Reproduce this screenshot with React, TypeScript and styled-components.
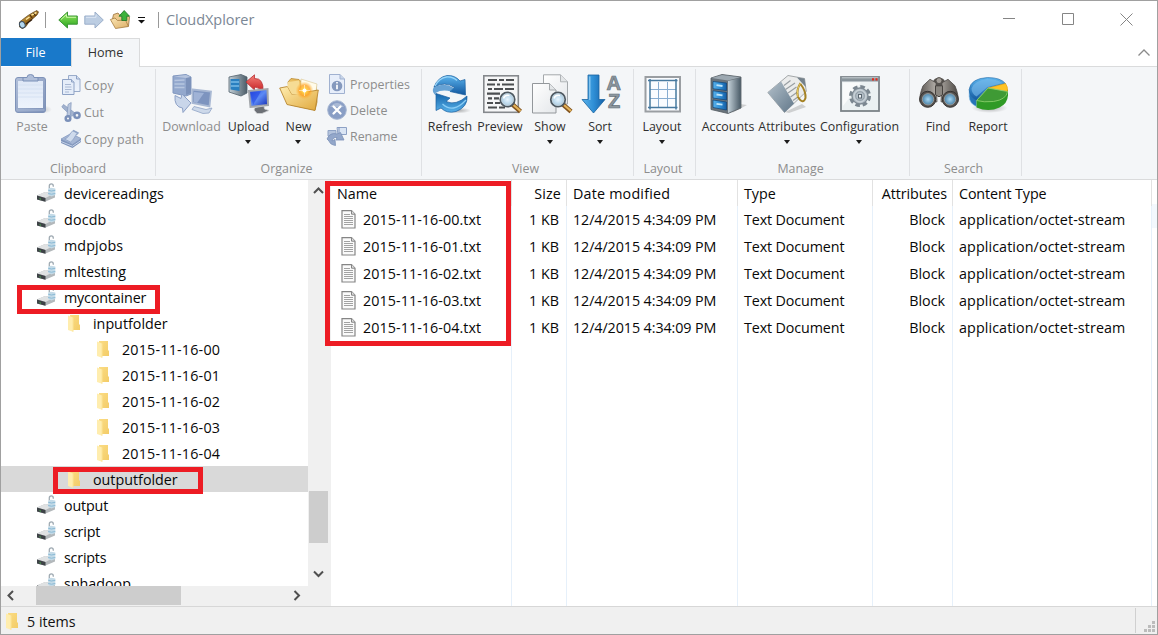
import React from 'react';
import styled, { createGlobalStyle, css } from 'styled-components';

const GlobalStyle = createGlobalStyle`
  *, *::before, *::after { box-sizing: border-box; }
  body { margin: 0; font-family: 'Open Sans', 'Noto Sans', sans-serif; color: #111; overflow: hidden; }
  svg { display: block; flex: none; overflow: visible; }
`;

const Window = styled.div`
  width: 1158px;
  height: 635px;
  display: flex;
  flex-direction: column;
  border: 1px solid #a0a0a0;
  background: #fff;
`;

const Text = styled.span<{ $track?: number }>`
  letter-spacing: ${(p) => p.$track ?? 0}px;
  white-space: pre;
`;

/* ---------- title bar ---------- */

const TitleBar = styled.header`
  height: 37px;
  display: flex;
  align-items: center;
  padding-left: 17px;
  flex: none;
`;
const QuickAccess = styled.div`
  display: flex;
  align-items: center;
  flex: 1;
  height: 37px;
`;
const TitleDivider = styled.i<{ $l: number; $r: number }>`
  width: 1px;
  height: 16px;
  background: #999;
  margin: 0 ${(p) => p.$r}px 0 ${(p) => p.$l}px;
`;
const QuickIcon = styled.span<{ $r: number }>`
  margin-right: ${(p) => p.$r}px;
`;
const AppTitle = styled.h1`
  margin: 0;
  font-size: 14.5px;
  font-weight: 400;
  line-height: 20px;
  color: #7b8795;
`;
const CaptionButton = styled.span`
  width: 58.5px;
  display: flex;
  justify-content: center;
`;
const CaptionButtons = styled.div`
  display: flex;
  align-items: center;
  padding-right: 1px;
`;

/* ---------- tabs ---------- */

const Tabs = styled.nav`
  height: 29px;
  display: flex;
  flex: none;
  font-size: 12.6px;
  line-height: 28px;
`;
const FileTab = styled.div`
  width: 70px;
  height: 28px;
  line-height: 29px;
  padding-right: 1px;
  text-align: center;
  color: #fff;
  background: #1979ca;
`;
const HomeTab = styled.div`
  width: 69px;
  text-align: center;
  color: #333;
  background: #f4f6f8;
  border: 1px solid #dadbdc;
  border-bottom: 0;
  line-height: 27px;
`;
const TabRest = styled.div`
  flex: 1;
  border-bottom: 1px solid #dadbdc;
  display: flex;
  justify-content: flex-end;
  padding: 11px 7px 0 0;
`;

/* ---------- ribbon ---------- */

const Ribbon = styled.section`
  height: 113px;
  flex: none;
  display: flex;
  background: #f4f6f8;
  border-bottom: 1px solid #dadbdc;
  padding-top: 2px;
`;
const Group = styled.div<{ $w: number }>`
  width: ${(p) => p.$w}px;
  height: 107px;
  border-right: 1px solid #dfe1e4;
  display: flex;
  flex-direction: column;
`;
const GroupBody = styled.div<{ $pad: number }>`
  display: flex;
  flex: none;
  height: 90px;
  padding: 5px 0 0 ${(p) => p.$pad}px;
`;
const GroupName = styled.div<{ $inset: number }>`
  text-align: center;
  font-size: 12.4px;
  line-height: 20px;
  padding-right: ${(p) => p.$inset}px;
  color: #8d8d8d;
`;
const BigButton = styled.div<{ $w: number; $off?: boolean }>`
  width: ${(p) => p.$w}px;
  flex: none;
  display: flex;
  flex-direction: column;
  align-items: center;
  font-size: 12.4px;
  line-height: 20px;
  color: ${(p) => (p.$off ? '#8d8d8d' : '#2f2f2f')};
  svg + span { margin-top: 3px; }
`;
const Caret = styled.i`
  width: 0;
  height: 0;
  border: 3px solid transparent;
  border-top: 4px solid #1c1c1c;
  border-bottom: 0;
  margin: 3px 1px 0 0;
`;
const SmallStack = styled.div<{ $pitch: number; $l: number; $top: number }>`
  display: flex;
  flex-direction: column;
  margin-left: ${(p) => p.$l}px;
  padding-top: ${(p) => p.$top}px;
  > div { height: ${(p) => p.$pitch}px; }
`;
const SmallButton = styled.div`
  display: flex;
  gap: 3px;
  align-items: flex-start;
  font-size: 12.4px;
  line-height: 21px;
  color: #8d8d8d;
`;

/* ---------- body ---------- */

const Body = styled.main`
  height: 426px;
  flex: none;
  display: flex;
`;
const TreePane = styled.aside`
  width: 330px;
  background: #f0f0f0;
  display: flex;
  flex-direction: column;
`;
const TreeTop = styled.div`
  display: flex;
  height: 406px;
`;
const Tree = styled.div`
  width: 307px;
  height: 406px;
  overflow: hidden;
  background: #fff;
`;
const rowText = css`
  font-size: 14.3px;
  line-height: 26px;
  color: #080808;
`;
const TreeRow = styled.div<{ $depth: number; $selected?: boolean }>`
  ${rowText}
  position: relative;
  height: 26px;
  display: flex;
  align-items: center;
  gap: 8px;
  padding-left: ${(p) => 35 + p.$depth * 29}px;
  background: ${(p) => (p.$selected ? '#d9d9d9' : 'transparent')};
  > span { padding-top: 1px; }
`;
const Highlight = styled.div<{ $x: number; $y: number; $w: number; $h: number }>`
  position: absolute;
  left: ${(p) => p.$x}px;
  top: ${(p) => p.$y}px;
  width: ${(p) => p.$w}px;
  height: ${(p) => p.$h}px;
  border: 5px solid #ed1c24;
  z-index: 2;
`;
const VScroll = styled.div`
  width: 20px;
  margin-left: 1px;
  display: flex;
  flex-direction: column;
  padding: 7px 0 8px;
`;
const VThumb = styled.div`
  width: 19px;
  height: 52px;
  background: #cdcdcd;
  margin: 296px 0 27px;
`;
const HScroll = styled.div`
  display: flex;
  height: 19px;
  align-items: center;
`;
const HThumb = styled.div`
  width: 145px;
  height: 19px;
  background: #cdcdcd;
  margin: 0 112px 0 21px;
`;
const FileList = styled.section`
  position: relative;
  flex: 1;
  display: flex;
`;
const Column = styled.div<{ $w: number; $right?: boolean }>`
  width: ${(p) => p.$w}px;
  flex: none;
  text-align: ${(p) => (p.$right ? 'right' : 'left')};
  border-right: 1px solid #e6f0fa;
`;
const HeadCell = styled.div<{ $right?: boolean }>`
  ${rowText}
  height: 26px;
  line-height: 28px;
  padding: 0 ${(p) => (p.$right ? 5 : 0)}px 0 6px;
  margin-right: -1px;
  border-right: 1px solid #e2e2e2;
`;
const Cell = styled.div<{ $right?: boolean; $icon?: boolean }>`
  ${rowText}
  height: 27px;
  line-height: 27px;
  display: flex;
  align-items: center;
  justify-content: ${(p) => (p.$right ? 'flex-end' : 'flex-start')};
  gap: 7px;
  padding: 0 ${(p) => (p.$right ? 7 : 0)}px 0 ${(p) => (p.$icon ? 10 : 6)}px;
`;
const ListEdge = styled.div`
  flex: 1;
  height: 24px;
  margin-top: 24px;
  background: #f3f8fd;
`;

const StatusBar = styled.footer`
  flex: 1;
  border-top: 1px solid #d7d7d7;
  background: #f0f0f0;
  display: flex;
  align-items: center;
  padding-left: 2px;
  gap: 4px;
  font-size: 14.3px;
  > span { padding-top: 2px; }
`;
const Grip = styled.div`
  margin-left: auto;
  height: 25px;
  border-left: 1px solid #d0d0d0;
  padding: 13px 1px 0 8px;
`;

/* ---------- shared gradients ---------- */

const Gradients = () => (
  <svg width="0" height="0">
    <defs>
      <linearGradient id="disPaper" x1="0" y1="0" x2="0" y2="1"><stop stopColor="#dfe8f6" /><stop offset="1" stopColor="#edf3fc" /></linearGradient>
      <linearGradient id="disFrame" x1="0" y1="0" x2="1" y2="1"><stop stopColor="#b3c1da" /><stop offset="1" stopColor="#7d91b8" /></linearGradient>
      <linearGradient id="green" x1="0" y1="0" x2="0" y2="1"><stop stopColor="#9bea62" /><stop offset="1" stopColor="#28a51f" /></linearGradient>
      <linearGradient id="blue" x1="0" y1="0" x2="0" y2="1"><stop stopColor="#5cb5ee" /><stop offset="1" stopColor="#12579f" /></linearGradient>
      <linearGradient id="blueDeep" x1="0" y1="0" x2="0" y2="1"><stop stopColor="#1565ab" /><stop offset="1" stopColor="#58b0e8" /></linearGradient>
      <linearGradient id="blueH" x1="0" y1="0" x2="1" y2="0"><stop stopColor="#5ab2ea" /><stop offset=".5" stopColor="#2f8fd6" /><stop offset="1" stopColor="#155fa6" /></linearGradient>
      <linearGradient id="gold" x1="0" y1="0" x2="1" y2="1"><stop stopColor="#ffedb0" /><stop offset="1" stopColor="#e0a83c" /></linearGradient>
      <linearGradient id="tan" x1="0" y1="0" x2="1" y2="1"><stop stopColor="#fbe6b5" /><stop offset="1" stopColor="#dcae66" /></linearGradient>
      <linearGradient id="steel" x1="0" y1="0" x2="1" y2="0"><stop stopColor="#c3d0d8" /><stop offset="1" stopColor="#4c5d69" /></linearGradient>
      <linearGradient id="slate" x1="0" y1="0" x2="1" y2="1"><stop stopColor="#b3c0ca" /><stop offset="1" stopColor="#62788a" /></linearGradient>
      <linearGradient id="red" x1="0" y1="0" x2="0" y2="1"><stop stopColor="#f58078" /><stop offset="1" stopColor="#c41e22" /></linearGradient>
      <linearGradient id="paper" x1="0" y1="0" x2="1" y2="1"><stop stopColor="#fff" /><stop offset="1" stopColor="#e4e7ea" /></linearGradient>
      <linearGradient id="screen" x1="0" y1="0" x2="1" y2="1"><stop stopColor="#1b3bd4" /><stop offset=".5" stopColor="#5d8bf5" /><stop offset="1" stopColor="#0f25b0" /></linearGradient>
      <linearGradient id="folderBack" x1="0" y1="0" x2="1" y2="1"><stop stopColor="#fbdc83" /><stop offset="1" stopColor="#f3cc68" /></linearGradient>
      <linearGradient id="brass" x1="0" y1="0" x2="1" y2="1"><stop stopColor="#f6d774" /><stop offset=".5" stopColor="#9b6a1c" /><stop offset="1" stopColor="#4b2706" /></linearGradient>
      <linearGradient id="barrel" x1="0" y1="0" x2="1" y2="0"><stop stopColor="#5a5652" /><stop offset=".45" stopColor="#b9b4ae" /><stop offset="1" stopColor="#4a4642" /></linearGradient>
      <radialGradient id="glow"><stop stopColor="#fff" /><stop offset=".25" stopColor="#ffd24a" /><stop offset=".6" stopColor="#ff9d1c" stopOpacity=".75" /><stop offset="1" stopColor="#ffb83a" stopOpacity="0" /></radialGradient>
      <radialGradient id="lens"><stop stopColor="#e9f6ff" /><stop offset="1" stopColor="#9fc6e0" /></radialGradient>
      <radialGradient id="lensDark"><stop stopColor="#a7d7f3" /><stop offset="1" stopColor="#4b83a8" /></radialGradient>
      <radialGradient id="shadow"><stop stopColor="#000" stopOpacity=".3" /><stop offset="1" stopColor="#000" stopOpacity="0" /></radialGradient>
    </defs>
  </svg>
);

const Big = ({ children }: { children: React.ReactNode }) => <svg width="40" height="40" viewBox="0 0 40 40">{children}</svg>;
const Small = ({ children }: { children: React.ReactNode }) => <svg width="20" height="20" viewBox="0 0 20 20">{children}</svg>;

/* ---------- title bar icons ---------- */

const Telescope = () => (
  <svg width="21" height="20" viewBox="0 0 21 20">
    <path d="M1.500 12 6 8.500 10 5.500 15 2.500 19 .5 20.500 2 19 5 15 8.500 10.500 12.500 8 16.500 4.500 18.500 1.500 17z" fill="url(#brass)" stroke="#5d421c" strokeWidth=".7" />
    <path d="M8 9.500 11.500 7M13.500 5.200 18.500 2.500" stroke="#ffe9a0" strokeWidth="1.500" />
    <path d="M12 5 14.500 8.500M15.500 3 17.500 6" stroke="#3a210a" strokeWidth=".9" />
    <path d="M8 14 14 9.500" stroke="#35200d" strokeWidth="1.500" />
    <ellipse cx="4.300" cy="14.800" rx="2.700" ry="3.300" fill="#b3d8f0" stroke="#3c4e60" transform="rotate(-25 4.300 14.800)" />
  </svg>
);
const BackArrow = () => (
  <Small><path d="M.8 10 9.500 2V6H19.300V14.200H9.500V18z" fill="url(#green)" stroke="#3c9636" /><path d="M3 9.500 8.500 4.500V7.300H18" stroke="#c9f7a6" fill="none" /></Small>
);
const ForwardArrow = () => (
  <Small><path d="M19.300 10 11 2V6H.8V14.200H11V18z" fill="#bccde2" stroke="#9bafca" /><path d="M2 7.300h10V4.500" stroke="#dce7f4" fill="none" /></Small>
);
const FolderUp = () => (
  <Small>
    <path d="M2.500 9 3.500 4.500 8 3 9.500 5 17 4.500 19.500 7 18.500 16 6 17z" fill="#ecc88c" stroke="#98703a" strokeWidth=".8" />
    <path d="M.4 9.500 5 8 7.500 10.500 15.500 10 18.500 16.500 5.500 18.500z" fill="url(#tan)" stroke="#a67c40" strokeWidth=".8" />
    <path d="M14.200.5 19.500 6.200H16.800V10.500H11.800V6.200H9z" fill="#3db23c" stroke="#1d7426" strokeWidth=".8" />
  </Small>
);

/* ---------- ribbon icons ---------- */

const PasteIcon = () => (
  <Big>
    <ellipse cx="32" cy="35.500" rx="8" ry="4" fill="url(#shadow)" opacity=".5" />
    <rect x="3.500" y="3.500" width="30" height="35" rx="2.500" fill="url(#disFrame)" stroke="#7f93b9" />
    <rect x="6" y="7" width="25" height="27" fill="url(#disPaper)" />
    <path d="M6 11h25M6 15h25M6 19h25M6 23h25" stroke="#d5e1f2" />
    <path d="M4.500 36h28" stroke="#a8b8d5" />
    <path d="M11 7V3.500h4Q15 .5 18.500.5T22 3.500h4v3.500z" fill="#b0bfd9" stroke="#7b90b7" />
  </Big>
);
const CopyIcon = () => (
  <Small>
    <path d="M7.500.5h8l3.500 3.500v12.500H7.500z" fill="url(#disPaper)" stroke="#9aacca" />
    <path d="M1.500 4.500h9l2.500 2.500v12.500H1.500z" fill="#e5edf9" stroke="#8ea2c5" />
    <path d="M4 9.500h6M4 12h6.500M4 14.500h6.500M4 17h4" stroke="#aab9d4" />
    <path d="M15.500.5v3.500h3.500M10.500 4.500v2.500h2.500" stroke="#8ea2c5" fill="#d3deef" />
  </Small>
);
const CutIcon = () => (
  <Small>
    <path d="M.8 5 2.500 2.500 14 11 11 14.500z" fill="#a2b2ce" stroke="#8196bb" strokeWidth=".7" />
    <path d="M10.200.5 9.500 13.500 6 13.500 7 2.500z" fill="#bac7dd" stroke="#8196bb" strokeWidth=".7" />
    <circle cx="7" cy="16.500" r="2.300" fill="none" stroke="#7a90b9" strokeWidth="2.500" />
    <circle cx="16" cy="13.300" r="2.600" fill="none" stroke="#7a90b9" strokeWidth="2.500" />
  </Small>
);
const CopyPathIcon = () => (
  <Small>
    <path d="M0 10 10 4.500 20 9.500V13L11.500 19 0 14z" fill="#7e94bb" />
    <path d="M0 10 10 4.500 20 9.500 11.500 15.500z" fill="#a5b6d4" stroke="#8ca0c4" strokeWidth=".7" />
    <path d="M3.500 10C8 9 8 5 12 1.500L17 4C13 7.500 13 11 9.500 13z" fill="#cedaec" stroke="#8ca0c4" strokeWidth=".8" />
    <path d="M12 1.500 17 4 15 6" fill="none" stroke="#92a6c8" strokeWidth="1.500" />
    <path d="M0 12.500 11.500 17.200 20 11.500" stroke="#c3d0e6" fill="none" />
  </Small>
);
const DownloadIcon = () => (
  <Big>
    <path d="M1 2 14 .5 19 3v17L14 22 1 19z" fill="#93a8cd" stroke="#8298bf" />
    <path d="M14 3v18l5-2V3z" fill="#7c92ba" />
    <path d="M2 2.500 14 1l4.500 2-4.500 1z" fill="#b7c5de" />
    <path d="M2.500 6.500l10-.5M2.500 10h10M2.500 13.500h10" stroke="#b7c6e0" strokeWidth="1.300" />
    <path d="M3 21.500 9 24.500 10 20 19 29 11 38.500 10.500 34Q2 33 3 21.500z" fill="#c9d6ea" stroke="#8ca0c6" />
    <path d="M20.500 15.500 39 17.500 37.500 32.500 20.500 29z" fill="#7d94bf" stroke="#a8b8d3" strokeWidth="1.800" />
    <path d="M22 18 32 19 25 29 22 28z" fill="#a0b3d6" />
    <path d="M22 32.500 34 35.500 40 34 37 39 31 39.500 20 35.500z" fill="#cdd9ea" stroke="#8fa3c5" strokeWidth=".8" />
  </Big>
);
const UploadIcon = () => (
  <Big>
    <path d="M0 3 12 .5 18 3V19L12 22 0 18z" fill="url(#steel)" stroke="#51606b" strokeWidth=".8" />
    <path d="M1.500 5h9v12l-9-1.500z" fill="#2a7fc0" />
    <path d="M2 8h8M2 12h8" stroke="#9fd7f7" strokeWidth="1.200" />
    <path d="M17 8 25.500.8V4.500Q35 4 34 18Q31 13.500 25.500 13V16z" fill="url(#red)" stroke="#b63033" strokeWidth=".8" />
    <path d="M20 17 38.500 15 39 31 21.500 33z" fill="url(#screen)" stroke="#a2a6ab" strokeWidth="2" />
    <path d="M21.500 18.500 32 17.300 24 31z" fill="#2348e4" opacity=".6" />
    <path d="M26 33.500 35 32 35.500 35 40 36.500 33 39.500 28 39.500 25 36z" fill="#6c7076" stroke="#d0d2d4" strokeWidth=".8" />
  </Big>
);
const NewIcon = () => (
  <Big>
    <path d="M9 8 12 4.500 20 5.500 23 8.500 37 11 38 28 36 36 12 31z" fill="#e9bd61" stroke="#bb8a2d" strokeWidth=".8" />
    <path d="M22 5 38 10 36 25 22 20z" fill="#fffbea" stroke="#d9c48e" strokeWidth=".6" />
    <path d="M.7 14 8.500 12.500 13 20.500 39.300 16 36 36.500 8 30.500z" fill="url(#gold)" stroke="#b88731" strokeWidth=".9" />
    <path d="M9 8 20 6.500 22 20 13 20.500 8.500 12.500z" fill="#f6dc95" />
    <circle cx="25.500" cy="16.500" r="9" fill="url(#glow)" />
    <path d="M25.500 11v11M20 16.500h11" stroke="#fff" strokeWidth=".5" />
    <circle cx="25.500" cy="16.500" r="2" fill="#fff" />
  </Big>
);
const PropertiesIcon = () => (
  <Small>
    <path d="M2.500.5H13l4.500 4.500V19.500H2.500z" fill="#e7eefa" stroke="#a0b1d0" />
    <path d="M13 .5V5h4.500" fill="#c8d5e9" stroke="#a0b1d0" />
    <circle cx="10" cy="12" r="5.300" fill="#8599be" />
    <path d="M10 10.800v4.500M10 8v1.600" stroke="#fff" strokeWidth="1.700" />
  </Small>
);
const DeleteIcon = () => (
  <Small>
    <circle cx="10" cy="10" r="9.300" fill="#899ec5" stroke="#a6b6d2" />
    <path d="M3 7Q10-1 17 7" fill="#a9b9d5" />
    <path d="M6.500 6.500l7 7M13.500 6.500l-7 7" stroke="#fff" strokeWidth="2.300" strokeLinecap="round" />
  </Small>
);
const RenameIcon = () => (
  <Small>
    <path d="M10 1.500h9.500v7H11z" fill="#dae5f4" stroke="#8da1c5" />
    <path d="M1 4.500h8v5.500H1z" fill="#b4c3dc" stroke="#8fa3c5" />
    <path d="M12 1v8" stroke="#8296bc" />
    <path d="M0 13Q3 6 10 8L13.500 6.500 17 14H9L10 11.500Q6 11 5 15L8 13.500 8.500 19.500Q3 18.500 2 15z" fill="#93a7ca" stroke="#7b90b7" strokeWidth=".8" />
  </Small>
);
const RefreshIcon = () => (
  <Big>
    <ellipse cx="28" cy="36.500" rx="13" ry="3" fill="url(#shadow)" />
    <path d="M4 13Q8 3 17 1.500Q25 1 30 7L35 5.500 35.500 21 20 17.500 24.500 13.500Q15 7 4 13z" fill="url(#blue)" stroke="#1a5f9f" strokeWidth=".7" />
    <path d="M5 12Q9 4 17 2.800Q23 2.500 27 6.500" stroke="#9ad6f8" fill="none" strokeWidth="1.300" />
    <path d="M3.500 13.500Q1 19 7 22L5.500 19Q12 15 21 17.500L24 14Q14 8 3.500 13.500z" fill="#2a7fc4" opacity=".7" />
    <path d="M6 19.500 20 24 16 27.500Q26 32 37 22Q38 33 26 37.500Q17 40 11 34L6 36.500z" fill="url(#blueDeep)" stroke="#1a5f9f" strokeWidth=".7" />
    <path d="M12.500 30Q23 40 36 26" stroke="#8bcdf5" fill="none" strokeWidth="1.300" />
  </Big>
);
const Magnifier = ({ x, y }: { x: number; y: number }) => (
  <g transform={`translate(${x} ${y})`}>
    <path d="M5 5 13 12" stroke="#80521d" strokeWidth="4.500" />
    <path d="M6 5.500 13 11.500" stroke="#e3b35b" strokeWidth="2.300" />
    <circle r="7.200" fill="url(#lens)" stroke="#4f5961" strokeWidth="1.800" />
    <circle r="5.800" fill="none" stroke="#c3d0d8" />
    <path d="M-4-1Q-3-5 2-4" stroke="#fff" strokeWidth="1.500" fill="none" />
  </g>
);
const PreviewIcon = () => (
  <Big>
    <rect x="3.800" y="1.800" width="34.500" height="36.500" fill="#f5f6f7" stroke="#85898d" strokeWidth="1.600" />
    <path d="M8 6h9M19 6h5M26 6h8M7 10.500h8M17 10.500h3M22 10.500h12M8 15h4M14 15h9M25 15h9M7 19.700h13M8 24.300h4M14 24.300h5M7 29h6M15 29h5M8 33.500h9M19 33.500h6" stroke="#4b4e51" strokeWidth="2.200" />
    <Magnifier x={27.500} y={25.500} />
  </Big>
);
const ShowIcon = () => (
  <Big>
    <path d="M13.500.8h17l7 7V30H13.500z" fill="url(#paper)" stroke="#a4a8ab" />
    <path d="M30.500.8v7h7" fill="#e3e6e8" stroke="#b0b4b7" />
    <path d="M2.500 9.500h17l6.500 6.500v23H2.500z" fill="url(#paper)" stroke="#93979b" />
    <path d="M19.500 9.500V16H26" fill="#e3e6e8" stroke="#a5a9ac" />
    <Magnifier x={28} y={25.500} />
  </Big>
);
const SortLetter = styled.text`
  font: 700 20px 'Liberation Sans', sans-serif;
  fill: #8d979f;
  stroke: #65717a;
  stroke-width: 0.7px;
`;
const SortIcon = () => (
  <Big>
    <path d="M8 1H19V25.500H25L13.500 39 2 25.500H8z" fill="url(#blueH)" stroke="#19639f" strokeWidth=".8" />
    <path d="M9.800 2.500v23.500" stroke="#8ccaf3" strokeWidth="1.300" />
    <SortLetter x="26.500" y="15.500">A</SortLetter>
    <SortLetter x="28" y="33.500">Z</SortLetter>
  </Big>
);
const LayoutIcon = () => (
  <Big>
    <rect x="3.500" y="3" width="34.500" height="34.500" fill="#fafcff" stroke="#9a9ea2" strokeWidth="2" />
    <path d="M8 15.500h26M8 24.500h26M16.500 8v26M25.500 8v26" stroke="#88add1" strokeWidth="1" />
    <path d="M6 6.500h29.500M6 33.500h29.500M8 5v30.500M34 5v30.500" stroke="#47799f" strokeWidth="1.500" />
  </Big>
);
const AccountsIcon = () => (
  <Big>
    <path d="M24 39 39 31 32 30z" fill="#888" opacity=".35" />
    <path d="M3 4 14 .5 33 3V34L20 39.500 3 35.500z" fill="#69737b" stroke="#525a61" strokeWidth=".8" />
    <path d="M20 7 32.500 4V33.500L20 39z" fill="url(#steel)" />
    <path d="M3.500 4 14 1 32 3.200 20 6.500z" fill="#9ca8b1" />
    <path d="M5 7.500 18.500 9V16.500L5 14.800zM5 16.800 18.500 18.500V26L5 24zM5 26 18.500 28V36L5 33.500z" fill="url(#blueH)" stroke="#0d4276" strokeWidth=".7" />
    <path d="M8.500 11.200 14.500 12M8.500 20.500 14.500 21.300M8.500 29.800 14.500 30.700" stroke="#bfe6fb" strokeWidth="1.800" />
  </Big>
);
const AttributesIcon = () => (
  <Big>
    <path d="M18 38 35 30 39 33 22 39z" fill="#777" opacity=".3" />
    <path d="M.8 18.500 21 1.500 37.500 4.500 39.300 17.500 17.500 38.500z" fill="#ebecec" stroke="#9b9fa2" strokeWidth=".9" />
    <path d="M.8 18.500 14 7.500 27 29.500 17.500 38.500z" fill="url(#slate)" />
    <path d="M17 11.500 23.500 6.500M18.500 15.500 28 9M21 19 29.500 13M23.500 23 30.500 18M26 26.500 31.500 22.500" stroke="#999fa3" strokeWidth="1.200" />
    <path d="M30 3.500 37.500 4.500 38.700 13z" fill="#75828c" />
    <path d="M33.500 9Q29 16 31 23Q36 31 38.500 24Q39 17 33.500 10" fill="none" stroke="#a58225" strokeWidth="2" />
    <path d="M33.500 9Q29 16 31 23" fill="none" stroke="#f1d76d" strokeWidth=".9" />
  </Big>
);
const ConfigurationIcon = () => (
  <Big>
    <rect x="1" y="3" width="38" height="34" fill="#ebf1f2" stroke="#7c8388" strokeWidth="1.800" />
    <path d="M1 3h38v4.500H1z" fill="#89949b" />
    <path d="M2 3.800h36" stroke="#c5ccd1" />
    <path d="M32 5.300h2M35.500 5.300h2" stroke="#e32a1b" strokeWidth="2.200" />
    <path d="M3 8.500h18L3 32z" fill="#fff" opacity=".7" />
    <circle cx="20" cy="22" r="9" fill="none" stroke="#7b8790" strokeWidth="4" strokeDasharray="4.400 2.669" />
    <circle cx="20" cy="22" r="8" fill="#b3bec6" stroke="#7e8a93" strokeWidth="1.300" />
    <circle cx="20" cy="22" r="6" fill="none" stroke="#cfd7dc" />
    <circle cx="20" cy="22" r="4.300" fill="none" stroke="#929ea7" />
    <rect x="18.500" y="20.500" width="3" height="3.500" fill="#eef2f4" stroke="#5b6771" />
  </Big>
);
const FindIcon = () => (
  <Big>
    <g transform="translate(1 2.800)">
      <path d="M14 5Q15 1 20 1T26 5L25 16H15z" fill="#55524e" />
      <path d="M4 9 11 2.500 17 6 18 25H1Q0 19 4 9zM36 9 29 2.500 23 6 22 25H39Q40 19 36 9z" fill="url(#barrel)" stroke="#4b4845" strokeWidth=".8" />
      <path d="M16.500 9h7v9l-3.500 2-3.500-2z" fill="#8a8680" stroke="#45413e" />
      <circle cx="20" cy="3.800" r="3" fill="#a39e98" stroke="#55514d" />
      <circle cx="8.700" cy="22.500" r="8" fill="#53504d" stroke="#363331" />
      <circle cx="31.300" cy="22.500" r="8" fill="#53504d" stroke="#363331" />
      <circle cx="9" cy="22.500" r="5.700" fill="url(#lensDark)" stroke="#a5a29e" strokeWidth=".8" />
      <circle cx="31" cy="22.500" r="5.700" fill="url(#lensDark)" stroke="#a5a29e" strokeWidth=".8" />
    </g>
  </Big>
);
const ReportIcon = () => (
  <Big>
    <g transform="translate(.5 1.500)">
      <ellipse cx="21" cy="32.500" rx="18" ry="5" fill="url(#shadow)" />
      <path d="M.7 14V21Q1 28 8 31V24z" fill="#2674b6" stroke="#7dbbe8" strokeWidth=".6" />
      <path d="M8 24.500V32Q20 37 31 32Q39 28 39.500 20V14z" fill="#2f9a25" />
      <path d="M19.500 12.500 8 25Q1 21 .7 14Q2 3 19 2Q32 2 37 8z" fill="url(#blue)" stroke="#2268a6" strokeWidth=".6" />
      <path d="M3 13Q6 5 18 3.500Q28 3.500 34 7.500L19 11.500 8 21Q3 18 3 13z" fill="#7cbcec" opacity=".6" />
      <path d="M19.500 12.500 37 8Q39.500 11 39 16z" fill="#ffc324" stroke="#e29c0e" strokeWidth=".6" />
      <path d="M19.500 12.500 39 16Q38 24 25 26Q15 27 8 25z" fill="#3f9a35" stroke="#92d471" strokeWidth=".8" />
    </g>
  </Big>
);

/* ---------- tree, list and scroll icons ---------- */

const ContainerIcon = () => (
  <Small>
    <path d="M1 12.500 9 9 19 10V14.500L9 18.800 1 16.500z" fill="#b3b8bb" />
    <path d="M1 12.500 9 9 19 10 9.500 15z" fill="#e0e2e3" />
    <path d="M1 12.500 9.500 15V18.700L1 16.500z" fill="#3e4347" />
    <path d="M3.500 15.700 5 16.200" stroke="#49b54d" />
    <path d="M13.300 5.500V3Q13.300.8 15.300.8T17.300 3V3.800" fill="none" stroke="#a0abb3" strokeWidth="1.300" />
    <path d="M12.200 5.500 15 4.700 19.300 5.500V12L15.500 13.500 12.200 12z" fill="#c3dae7" />
    <path d="M12.200 7.300 15.500 8 19.300 7.300M12.200 10.500 15.500 11.200 19.300 10.500" stroke="#83b5d3" strokeWidth=".9" fill="none" />
  </Small>
);
const FolderIcon = () => (
  <Small>
    <path d="M5 2H14V11L15 12V17H5z" fill="url(#folderBack)" />
    <path d="M3 2.500 8 4.500V18.700L3 17z" fill="#ffedae" />
    <path d="M8 4.500V18.700" stroke="#fbe396" />
  </Small>
);
const TextFileIcon = () => (
  <svg width="15" height="19" viewBox="0 0 15 19">
    <path d="M1 .6H10.500L14 4.200V18H1z" fill="#fafafa" stroke="#858585" strokeWidth="1.200" />
    <path d="M10.500.6V4.200H14" fill="#ddd" stroke="#858585" />
    <path d="M3 4.500h6M3 6.500h9M3 8.500h9M3 10.500h9M3 12.500h9M3 14.500h9" stroke="#a2a2a2" />
  </svg>
);

const chevrons = { up: 'M1 6 5.500 1.500 10 6', down: 'M1 1.500 5.500 6 10 1.500', left: 'M6 1 1.500 5.500 6 10', right: 'M1.500 1 6 5.500 1.500 10' };
const ScrollArrow = styled.svg<{ $l: number }>`
  margin-left: ${(p) => p.$l}px;
  fill: none;
  stroke: #505050;
  stroke-width: 2px;
`;
const Arrow = ({ dir, l }: { dir: keyof typeof chevrons; l: number }) => {
  const flat = dir === 'up' || dir === 'down';
  return <ScrollArrow $l={l} width={flat ? 11 : 8} height={flat ? 8 : 11}><path d={chevrons[dir]} /></ScrollArrow>;
};

/* ---------- data ---------- */

type Tool = { label: string; icon: React.FC; w: number; off?: boolean; menu?: boolean };
type MinorTool = { label: string; icon: React.FC; track?: number };
type GroupData = { name: string; w: number; pad: number; inset: number; tools: Tool[]; minor?: { pitch: number; gap: number; top: number; tools: MinorTool[] } };

const groups: GroupData[] = [
  { name: 'Clipboard', w: 155, pad: 6, inset: 0, tools: [{ label: 'Paste', icon: PasteIcon, w: 50, off: true }],
    minor: { pitch: 27, gap: 4, top: 1, tools: [
      { label: 'Copy', icon: CopyIcon, track: 0.2 }, { label: 'Cut', icon: CutIcon }, { label: 'Copy path', icon: CopyPathIcon, track: 0.15 }] } },
  { name: 'Organize', w: 266, pad: 6, inset: 4, tools: [
    { label: 'Download', icon: DownloadIcon, w: 59, off: true },
    { label: 'Upload', icon: UploadIcon, w: 55, menu: true },
    { label: 'New', icon: NewIcon, w: 45, menu: true }],
    minor: { pitch: 26, gap: 6, top: 0, tools: [
      { label: 'Properties', icon: PropertiesIcon }, { label: 'Delete', icon: DeleteIcon }, { label: 'Rename', icon: RenameIcon }] } },
  { name: 'View', w: 212, pad: 3, inset: 4, tools: [
    { label: 'Refresh', icon: RefreshIcon, w: 50 }, { label: 'Preview', icon: PreviewIcon, w: 50 },
    { label: 'Show', icon: ShowIcon, w: 50, menu: true }, { label: 'Sort', icon: SortIcon, w: 50, menu: true }] },
  { name: 'Layout', w: 62, pad: 3, inset: 3, tools: [{ label: 'Layout', icon: LayoutIcon, w: 50, menu: true }] },
  { name: 'Manage', w: 214, pad: 5, inset: 4, tools: [
    { label: 'Accounts', icon: AccountsIcon, w: 54 }, { label: 'Attributes', icon: AttributesIcon, w: 64, menu: true },
    { label: 'Configuration', icon: ConfigurationIcon, w: 81, menu: true }] },
  { name: 'Search', w: 112, pad: 3, inset: 4, tools: [{ label: 'Find', icon: FindIcon, w: 50 }, { label: 'Report', icon: ReportIcon, w: 50 }] },
];

const tree: { label: string; depth: number; track?: number }[] = [
  { label: 'devicereadings', depth: 0 }, { label: 'docdb', depth: 0, track: 0.15 }, { label: 'mdpjobs', depth: 0, track: 0.1 },
  { label: 'mltesting', depth: 0 }, { label: 'mycontainer', depth: 0, track: -0.15 }, { label: 'inputfolder', depth: 1 },
  { label: '2015-11-16-00', depth: 2, track: 0.2 }, { label: '2015-11-16-01', depth: 2, track: 0.2 }, { label: '2015-11-16-02', depth: 2, track: 0.2 },
  { label: '2015-11-16-03', depth: 2, track: 0.2 }, { label: '2015-11-16-04', depth: 2, track: 0.2 }, { label: 'outputfolder', depth: 1 },
  { label: 'output', depth: 0, track: -0.15 }, { label: 'script', depth: 0, track: -0.1 }, { label: 'scripts', depth: 0, track: -0.2 }, { label: 'sphadoop', depth: 0 },
];

const files = ['00', '01', '02', '03', '04'].map((n) => `2015-11-16-${n}.txt`);
const columns: { head: string; w: number; right?: boolean; value?: string; track?: number; headTrack?: number }[] = [
  { head: 'Name', w: 181, track: 0.07 },
  { head: 'Size', w: 55, right: true, value: '1 KB', headTrack: 0.15 },
  { head: 'Date modified', w: 171, value: '12/4/2015 4:34:09 PM', track: -0.08, headTrack: 0.2 },
  { head: 'Type', w: 135, value: 'Text Document', track: -0.12 },
  { head: 'Attributes', w: 80, right: true, value: 'Block', headTrack: -0.1 },
  { head: 'Content Type', w: 199, value: 'application/octet-stream', track: 0.1, headTrack: -0.12 },
];

export default function App() {
  return (
    <Window>
      <GlobalStyle />
      <TitleBar>
        <QuickAccess>
          <QuickIcon $r={0}><Telescope /></QuickIcon>
          <TitleDivider $l={6} $r={12} />
          <QuickIcon $r={6}><BackArrow /></QuickIcon>
          <QuickIcon $r={6}><ForwardArrow /></QuickIcon>
          <QuickIcon $r={8}><FolderUp /></QuickIcon>
          <svg width="7" height="8"><path d="M0 1.500h7" stroke="#111" /><path d="M0 4h7L3.500 7.500z" fill="#111" /></svg>
          <TitleDivider $l={13} $r={7} />
          <AppTitle><Text $track={-0.05}>CloudXplorer</Text></AppTitle>
        </QuickAccess>
        <CaptionButtons>
          <CaptionButton><svg width="13" height="13"><path d="M0 5.500h12" stroke="#858585" /></svg></CaptionButton>
          <CaptionButton><svg width="13" height="13"><path d="M.5.5h11v11H.5z" fill="none" stroke="#858585" /></svg></CaptionButton>
          <CaptionButton><svg width="13" height="13"><path d="M.5.5l12 12M12.500.5l-12 12" stroke="#858585" /></svg></CaptionButton>
        </CaptionButtons>
      </TitleBar>

      <Tabs>
        <FileTab>File</FileTab>
        <HomeTab>Home</HomeTab>
        <TabRest><svg width="12" height="7"><path d="M.5 6.500 6 1 11.500 6.500" fill="none" stroke="#8a8a8a" strokeWidth="1.300" /></svg></TabRest>
      </Tabs>

      <Ribbon>
        {groups.map((g) => (
          <Group key={g.name} $w={g.w}>
            <GroupBody $pad={g.pad}>
              {g.tools.map(({ icon: Icon, ...t }) => (
                <BigButton key={t.label} $w={t.w} $off={t.off}>
                  <Icon />
                  <Text>{t.label}</Text>
                  {t.menu && <Caret />}
                </BigButton>
              ))}
              {g.minor && (
                <SmallStack $pitch={g.minor.pitch} $l={g.minor.gap} $top={g.minor.top}>
                  {g.minor.tools.map(({ icon: Icon, label, track }) => (
                    <SmallButton key={label}><Icon /><Text $track={track}>{label}</Text></SmallButton>
                  ))}
                </SmallStack>
              )}
            </GroupBody>
            <GroupName $inset={g.inset}>{g.name}</GroupName>
          </Group>
        ))}
      </Ribbon>

      <Body>
        <TreePane>
          <TreeTop>
            <Tree>
              {tree.map((n) => (
                <TreeRow key={n.label} $depth={n.depth} $selected={n.label === 'outputfolder'}>
                  {n.depth ? <FolderIcon /> : <ContainerIcon />}
                  <Text $track={n.track}>{n.label}</Text>
                  {n.label === 'mycontainer' && <Highlight $x={16} $y={1} $w={143} $h={29} />}
                  {n.label === 'outputfolder' && <Highlight $x={52} $y={1} $w={150} $h={27} />}
                </TreeRow>
              ))}
            </Tree>
            <VScroll><Arrow dir="up" l={4} /><VThumb /><Arrow dir="down" l={4} /></VScroll>
          </TreeTop>
          <HScroll><Arrow dir="left" l={6} /><HThumb /><Arrow dir="right" l={0} /></HScroll>
        </TreePane>
        <FileList>
          {columns.map((c) => (
            <Column key={c.head} $w={c.w} $right={c.right}>
              <HeadCell $right={c.right}><Text $track={c.headTrack}>{c.head}</Text></HeadCell>
              {files.map((f) => (
                <Cell key={f} $right={c.right} $icon={!c.value}>
                  {!c.value && <TextFileIcon />}
                  <Text $track={c.track}>{c.value ?? f}</Text>
                </Cell>
              ))}
            </Column>
          ))}
          <ListEdge />
          <Highlight $x={-6} $y={1} $w={186} $h={165} />
        </FileList>
      </Body>

      <StatusBar>
        <FolderIcon />
        <Text>5 items</Text>
        <Grip><svg width="12" height="11"><path d="M8 0h3v3H8zM4 4h3v3H4zM8 4h3v3H8zM0 8h3v3H0zM4 8h3v3H4zM8 8h3v3H8z" fill="#bcbcbc" /></svg></Grip>
      </StatusBar>
      <Gradients />
    </Window>
  );
}
